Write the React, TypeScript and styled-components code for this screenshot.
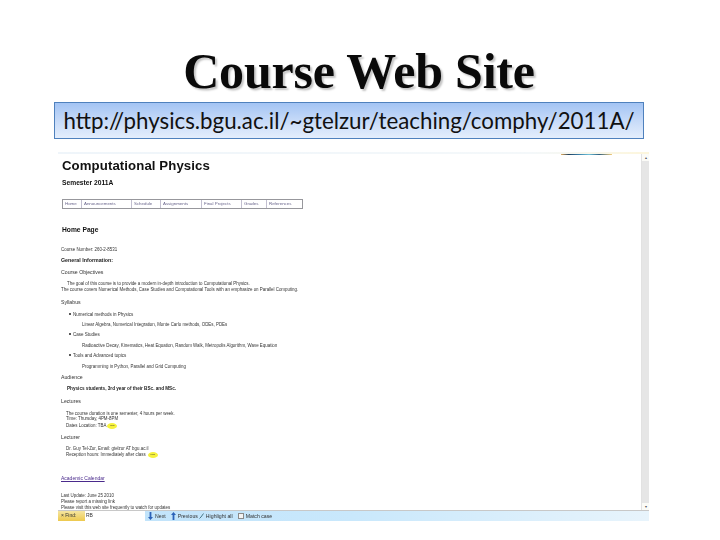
import React from "react";
import styled, { createGlobalStyle } from "styled-components";

const Global = createGlobalStyle`
  html, body { margin: 0; padding: 0; background: #fff; }
  body { width: 720px; height: 540px; overflow: hidden; font-family: "Liberation Sans", Arial, sans-serif; }
`;

const Slide = styled.div`
  width: 720px;
  height: 540px;
  display: flex;
  flex-direction: column;
  background: #fff;
`;
const Title = styled.h1`
  margin: 43px 0 0;
  height: 59px;
  line-height: 56px;
  font-family: "Liberation Serif", serif;
  font-size: 50px;
  font-weight: 700;
  letter-spacing: -0.2px;
  text-align: center;
  color: #0a0a0a;
  text-shadow: 2px 2px 2px #c4c4c4;
  padding-right: 2px;
`;
const UrlBox = styled.div`
  box-sizing: border-box;
  margin-left: 54px;
  width: 590px;
  height: 37px;
  display: flex;
  align-items: center;
  justify-content: center;
  border: 1px solid #4f81bd;
  background: linear-gradient(#a3c4f4, #c6daf8 50%, #e4eefc);
  font-family: Lato, sans-serif;
  font-size: 22.3px;
  color: #111;
  white-space: nowrap;
`;
const Shot = styled.div`
  position: relative;
  box-sizing: border-box;
  margin: 13px 0 0 58px;
  width: 591px;
  height: 369px;
  display: flex;
  flex-direction: column;
  overflow: hidden;
  border-top: 2px solid;
  border-image: linear-gradient(90deg, #eff5fa, #f4f8fa 80%, #fdf6dc) 1;
`;
const LogoStrip = styled.div`
  position: absolute;
  top: -1px;
  left: 503px;
  width: 51px;
  height: 2px;
  filter: blur(0.4px);
  background: linear-gradient(90deg, #e8b060, #20405f 15%, #3a7fa8 35%, #6fc0d8 55%, #2f5f80 75%, #f5cf80);
`;
const Main = styled.div`
  flex: 1;
  min-height: 0;
  display: flex;
`;
const Doc = styled.div`
  flex: 1;
  min-width: 0;
  padding: 4px 0 0 3px;
  display: flex;
  flex-direction: column;
  align-items: flex-start;
  filter: blur(0.45px);
  color: #333;
`;
const H1 = styled.div`
  margin-left: 1px;
  font-size: 13.2px;
  line-height: 15px;
  font-weight: 700;
  color: #111;
  letter-spacing: 0.1px;
  white-space: nowrap;
`;
const H2 = styled.div<{ $top: number }>`
  margin: ${(p) => p.$top}px 0 0 1px;
  font-size: 6.7px;
  line-height: 8px;
  font-weight: 700;
  color: #111;
  white-space: nowrap;
`;
const Line = styled.div<{ $top?: number; $left?: number; $bold?: boolean }>`
  margin-top: ${(p) => p.$top ?? 0}px;
  margin-left: ${(p) => p.$left ?? 0}px;
  font-size: 4.42px;
  line-height: 6px;
  font-weight: ${(p) => (p.$bold ? 700 : 400)};
  white-space: nowrap;
`;
const Label = styled(Line)`
  font-size: 5.2px;
`;
const Strong = styled(Line)`
  font-size: 5.3px;
  font-weight: 700;
  color: #222;
`;
const Emphasis = styled(Line)`
  font-size: 4.65px;
  font-weight: 700;
  color: #222;
`;
const Bullet = styled(Line)`
  font-size: 4.5px;
  &::before {
    content: "";
    display: inline-block;
    width: 2px;
    height: 2px;
    border-radius: 50%;
    background: #222;
    margin-right: 2px;
    vertical-align: 1px;
  }
`;
const Nav = styled.div`
  margin: 12px 0 0 1px;
  box-sizing: border-box;
  width: 241px;
  height: 10px;
  display: flex;
  align-items: stretch;
  border: 1px solid #97979c;
  background: #fff;
`;
const NavItem = styled.div<{ $w: number }>`
  box-sizing: border-box;
  width: ${(p) => p.$w}px;
  padding-left: 2px;
  border-right: 1px solid #c2bfd0;
  font-size: 4.4px;
  line-height: 8px;
  color: #6a668c;
  white-space: nowrap;
  &:last-child { border-right: 0; }
`;
const New = styled.span`
  display: inline-block;
  width: 10px;
  height: 6px;
  margin-left: 1px;
  border-radius: 50%;
  background: #f6f23c;
  font-size: 2.5px;
  line-height: 6px;
  text-align: center;
  vertical-align: 1px;
`;
const Anchor = styled(Line)`
  font-size: 5px;
  color: #4a2a8c;
  text-decoration: underline;
`;
const Scrollbar = styled.div`
  width: 8px;
  flex: none;
  display: flex;
  flex-direction: column;
  align-items: center;
  background: #ececec;
  border-left: 1px solid #e2e2e2;
  box-sizing: border-box;
`;
const ScrollEnd = styled.div`
  width: 8px;
  height: 7px;
  background: #fbfbf7;
  color: #555;
  font-size: 4px;
  line-height: 7px;
  text-align: center;
`;
const Thumb = styled.div`
  flex: 1;
  width: 100%;
  background: #e6e6e6;
`;
const FindBar = styled.div`
  flex: none;
  height: 10px;
  display: flex;
  align-items: center;
  border-top: 1px solid #c8c8c8;
  background: linear-gradient(90deg, #bfe2fa 0%, #c9e8fc 50%, #e8f4fc 100%);
  filter: blur(0.35px);
  color: #333;
  font-size: 5.2px;
  white-space: nowrap;
`;
const FindTab = styled.div`
  width: 27px;
  height: 100%;
  padding-left: 3px;
  box-sizing: border-box;
  background: linear-gradient(#f5e5a0, #edc94e);
  line-height: 9px;
  font-size: 5px;
`;
const FindInput = styled.div`
  width: 60px;
  height: 100%;
  padding-left: 1px;
  box-sizing: border-box;
  background: #fff;
  line-height: 9px;
  font-size: 5px;
`;
const FindAction = styled.div<{ $left: number }>`
  margin-left: ${(p) => p.$left}px;
  display: flex;
  align-items: center;
  gap: 2px;
`;
const Check = styled.span`
  width: 6px;
  height: 6px;
  border: 1px solid #8a8a8a;
  background: #f4f4f4;
  box-sizing: border-box;
`;

const Arrow = ({ up }: { up?: boolean }) => (
  <svg width="5" height="8" viewBox="0 0 5 8">
    <path d={up ? "M2.5 0 5 3H3.4V8H1.6V3H0Z" : "M2.5 8 5 5H3.4V0H1.6V5H0Z"} fill="#2c62b8" />
  </svg>
);

const Marker = () => (
  <svg width="5" height="6" viewBox="0 0 5 6">
    <path d="M0.5 5.5 2 4 4.5 0.5" fill="none" stroke="#4a7a8a" strokeWidth="1" />
  </svg>
);

const nav: [string, number][] = [
  ["Home", 19],
  ["Announcements", 50],
  ["Schedule", 29],
  ["Assignments", 41],
  ["Final Projects", 40],
  ["Grades", 25],
  ["References", 35],
];

export default function App() {
  return (
    <Slide>
      <Global />
      <Title>Course Web Site</Title>
      <UrlBox>http://physics.bgu.ac.il/~gtelzur/teaching/comphy/2011A/</UrlBox>
      <Shot>
        <LogoStrip />
        <Main>
          <Doc>
            <H1>Computational Physics</H1>
            <H2 $top={6}>Semester 2011A</H2>
            <Nav>
              {nav.map(([t, w]) => (
                <NavItem key={t} $w={w}>{t}</NavItem>
              ))}
            </Nav>
            <H2 $top={17}>Home Page</H2>
            <Line $top={13}>Course Number: 260-2-8531</Line>
            <Strong $top={4}>General Information:</Strong>
            <Label $top={6}>Course Objectives</Label>
            <Line $top={6} $left={6}>The goal of this course is to provide a modern in-depth introduction to Computational Physics.</Line>
            <Line>The course covers Numerical Methods, Case Studies and Computational Tools with an emphasize on Parallel Computing.</Line>
            <Label $top={6}>Syllabus</Label>
            <Bullet $top={7} $left={8}>Numerical methods in Physics</Bullet>
            <Line $top={4} $left={21}>Linear Algebra, Numerical Integration, Monte Carlo methods, ODEs, PDEs</Line>
            <Bullet $top={4} $left={8}>Case Studies</Bullet>
            <Line $top={5} $left={21}>Radioactive Decay, Kinematics, Heat Equation, Random Walk, Metropolis Algorithm, Wave Equation</Line>
            <Bullet $top={4} $left={8}>Tools and Advanced topics</Bullet>
            <Line $top={5} $left={21}>Programming in Python, Parallel and Grid Computing</Line>
            <Label $top={4}>Audience</Label>
            <Emphasis $top={6} $left={6}>Physics students, 3rd year of their BSc. and MSc.</Emphasis>
            <Label $top={6}>Lectures</Label>
            <Line $top={7} $left={5}>The course duration is one semester, 4 hours per week.</Line>
            <Line $top={-1} $left={5}>Time: Thursday, 4PM-8PM</Line>
            <Line $top={1} $left={5}>Dates Location: TBA<New>new</New></Line>
            <Label $top={5}>Lecturer</Label>
            <Line $top={6} $left={5}>Dr. Guy Tel-Zur, Email: gtelzur AT bgu.ac.il</Line>
            <Line $left={5}>Reception hours: Immediately after class <New>new</New></Line>
            <Anchor $top={17}>Academic Calendar</Anchor>
            <Line $top={12}>Last Update: June 25 2010</Line>
            <Line>Please report a missing link</Line>
            <Line>Please visit this web site frequently to watch for updates</Line>
          </Doc>
          <Scrollbar>
            <ScrollEnd>▴</ScrollEnd>
            <Thumb />
            <ScrollEnd>▾</ScrollEnd>
          </Scrollbar>
        </Main>
        <FindBar>
          <FindTab>× Find:</FindTab>
          <FindInput>RB</FindInput>
          <FindAction $left={3}><Arrow /><span>Next</span></FindAction>
          <FindAction $left={5}><Arrow up /><span>Previous</span></FindAction>
          <FindAction $left={1}><Marker /><span>Highlight all</span></FindAction>
          <FindAction $left={5}><Check /><span>Match case</span></FindAction>
        </FindBar>
      </Shot>
    </Slide>
  );
}
